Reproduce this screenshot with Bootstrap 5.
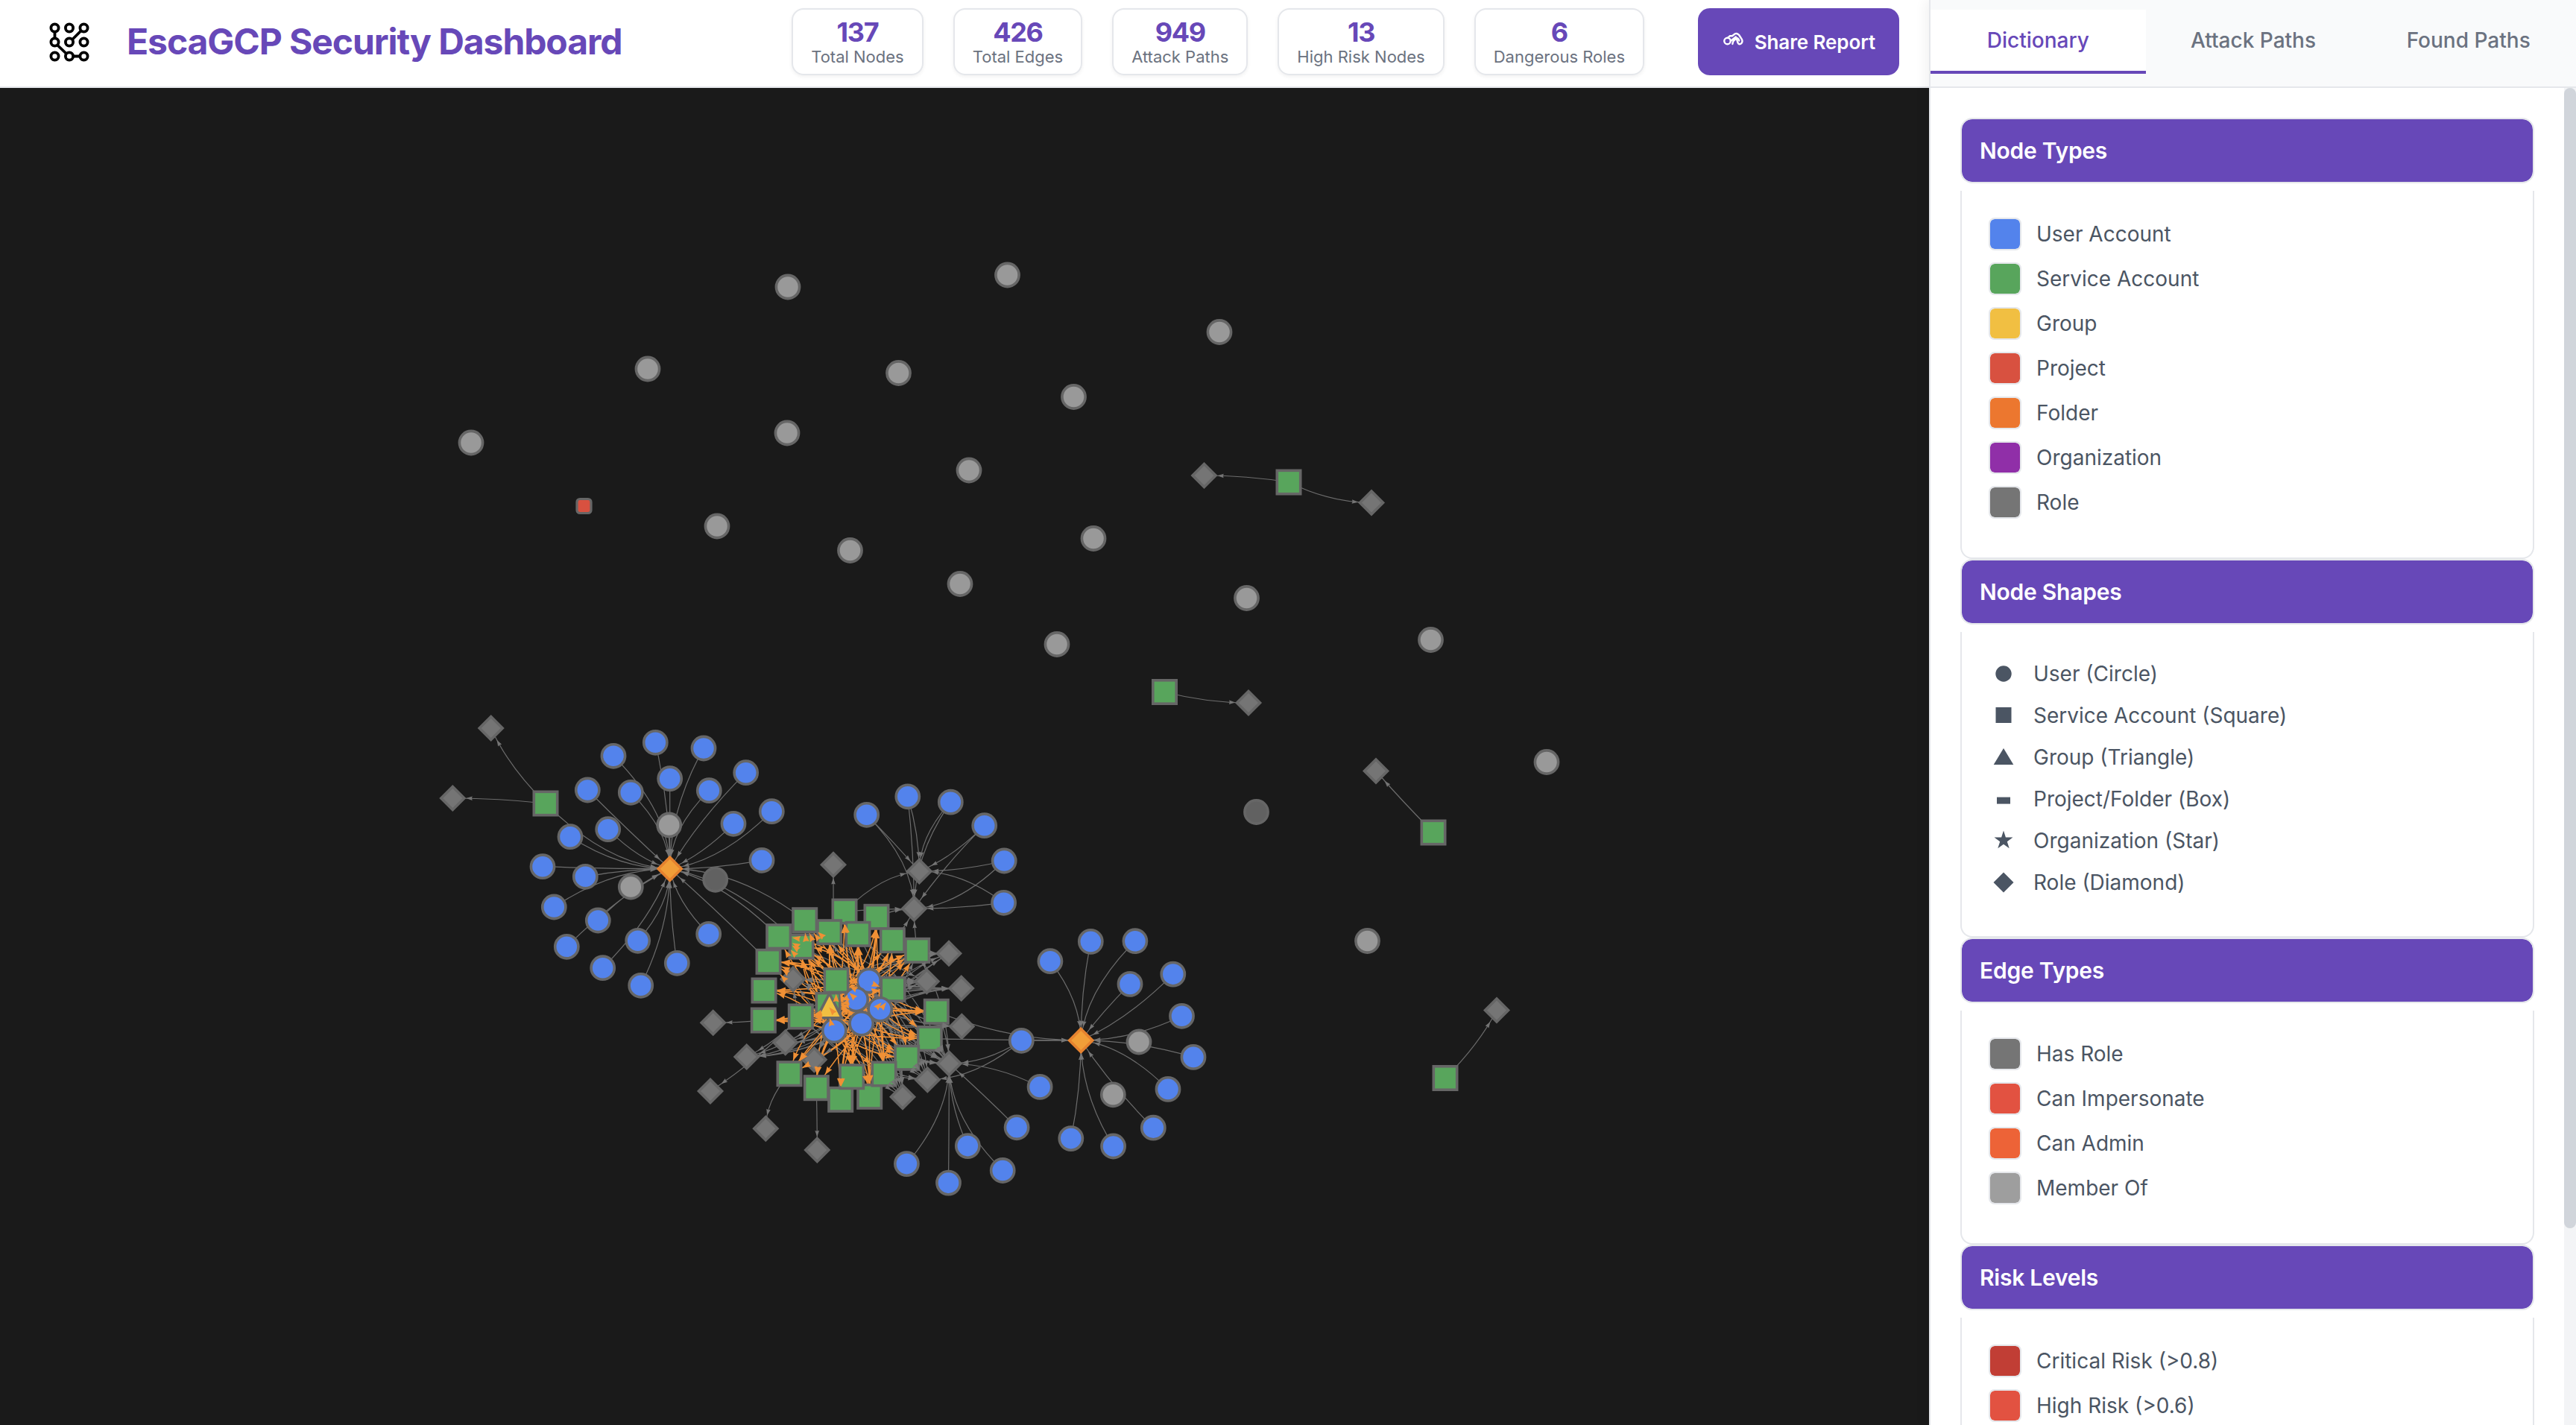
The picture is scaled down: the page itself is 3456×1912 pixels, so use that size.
<!DOCTYPE html>
<html lang="en">
<head>
<meta charset="utf-8">
<title>EscaGCP Security Dashboard</title>
<link href="https://cdn.jsdelivr.net/npm/bootstrap@5.3.0/dist/css/bootstrap.min.css" rel="stylesheet">
<style>
:root { --brand: #6748b8; --line: #e5e7eb; }
body { font-family: Inter, "Liberation Sans", sans-serif; background: #fff; }
.topbar { height: 118px; padding: 0 40px 5px 60px; border-bottom: 2px solid var(--line); }
.app-logo { width: 66px; height: 60px; margin-right: 44px; }
.app-title { font-size: 48px; font-weight: 700; letter-spacing: -1.08px; line-height: 60px; color: var(--brand); }
.stat-row { gap: 40px; margin-right: 72px; }
.stat-box { height: 90px; padding: 12px 24px 0; border: 2px solid var(--line); border-radius: 16px; box-shadow: 0 2px 5px rgba(0,0,0,.06); }
.stat-num { font-size: 36px; line-height: 36px; font-weight: 700; letter-spacing: -1.3px; color: var(--brand); }
.stat-cap { font-size: 22px; line-height: 30px; color: #6b7280; }
.share-btn, .share-btn:hover { width: 270px; height: 90px; border-radius: 16px; background: var(--brand); color: #fff; font-size: 26px; font-weight: 600; letter-spacing: -.1px; border: 0; padding: 2px 32px 0; }
.share-btn svg { width: 30px; height: 20px; margin-right: 14px; margin-top: -7px; }
.graph-area { background: #1a1a1a; min-height: 0; }
.graph-area svg { width: 2588px; height: 1794px; }
.side { width: 868px; border-left: 2px solid var(--line); box-shadow: -4px 0 16px rgba(0,0,0,.06); z-index: 1; }
.tab-strip { height: 118px; padding-top: 13px; background: #f9fafb; border-bottom: 2px solid var(--line); }
.tab-strip .nav-link { height: 86px; padding: 20px 0 0; line-height: 42px; font-size: 28px; font-weight: 500; color: #6b7280; border-radius: 0; border-bottom: 4px solid transparent; }
.tab-strip .nav-link.active { background: #fff; color: var(--brand); border-bottom-color: var(--brand); }
.dict { padding: 40px 40px 0; }
.sec-head { height: 88px; padding-left: 24px; background: var(--brand); background-clip: padding-box; border: 2px solid var(--line); border-radius: 16px; color: #fff; font-size: 30px; font-weight: 600; letter-spacing: -.25px; }
.sec-body { margin-top: 10px; padding: 36px 36px 36px; border: 2px solid var(--line); border-top: 0; border-radius: 0 0 16px 16px; color: #4b5563; font-size: 28px; }
.swatch-row { height: 44px; gap: 20px; margin-bottom: 16px; }
.swatch { width: 44px; height: 44px; border: 2px solid var(--line); border-radius: 8px; background-clip: padding-box; }
.shape-row { height: 40px; gap: 20px; margin-bottom: 16px; }
.shape-row svg { width: 40px; height: 40px; fill: #4b5563; }
.bar-track { width: 16px; background: #f3f4f6; }
.bar-thumb { height: 1530px; border-radius: 8px; background: #d1d5db; }
</style>
</head>
<body>
<div class="d-flex vh-100 overflow-hidden">
  <main class="d-flex flex-column flex-grow-1">
    <header class="topbar d-flex align-items-center flex-shrink-0">
      <svg class="app-logo" viewBox="60 25 66 60" fill="none" stroke="#000" stroke-width="3.8">
        <circle cx="73.5" cy="36.5" r="5.1"/><circle cx="93" cy="36.5" r="5.1"/><circle cx="112.5" cy="36.5" r="5.1"/>
        <circle cx="73.5" cy="55.5" r="5.1"/><circle cx="93" cy="55.5" r="5.1"/><circle cx="112.5" cy="55.5" r="5.1"/>
        <circle cx="73.5" cy="74.5" r="5.1"/><circle cx="93" cy="74.5" r="5.1"/><circle cx="112.5" cy="74.5" r="5.1"/>
        <path d="M73.5 42V50M77 59.5L89 71M98 74.5H107M97 52L109 40"/>
      </svg>
      <h1 class="app-title mb-0 text-nowrap">EscaGCP Security Dashboard</h1>
      <div class="stat-row d-flex ms-auto text-center text-nowrap">
        <div class="stat-box"><div class="stat-num">137</div><div class="stat-cap">Total Nodes</div></div>
        <div class="stat-box"><div class="stat-num">426</div><div class="stat-cap">Total Edges</div></div>
        <div class="stat-box"><div class="stat-num">949</div><div class="stat-cap">Attack Paths</div></div>
        <div class="stat-box"><div class="stat-num">13</div><div class="stat-cap">High Risk Nodes</div></div>
        <div class="stat-box"><div class="stat-num">6</div><div class="stat-cap">Dangerous Roles</div></div>
      </div>
      <button class="share-btn btn d-flex align-items-center text-nowrap">
        <svg viewBox="0 0 30 20" fill="none" stroke="#fff" stroke-width="2.4" stroke-linecap="round"><circle cx="7.6" cy="12" r="4.3"/><path d="M8.5 7.4L11 5.2H14L18 2.2Q21 1 23.4 4L27 9.5Q29 14 25.5 16Q22.500 17 21.500 14L20.500 10.500M12 12L19 6.500M14.500 16Q15 11.500 18.500 9.500L21 8Q23 9 23.500 11.500"/></svg>
        <span>Share Report</span>
      </button>
    </header>
    <section class="graph-area flex-grow-1">
      <svg id="graph" class="d-block" viewBox="0 118 2588 1794"></svg>
    </section>
  </main>
  <aside class="side d-flex flex-column flex-shrink-0 bg-white">
    <nav class="tab-strip nav nav-fill flex-nowrap flex-shrink-0 align-items-start">
      <a class="nav-link active w-100">Dictionary</a>
      <a class="nav-link w-100">Attack Paths</a>
      <a class="nav-link w-100">Found Paths</a>
    </nav>
    <div class="d-flex flex-grow-1 overflow-hidden">
      <div class="dict flex-grow-1">
        <div class="sec-head d-flex align-items-center">Node Types</div>
        <div class="sec-body">
          <div class="swatch-row d-flex align-items-center"><span class="swatch" style="background-color:#5383ec"></span>User Account</div>
          <div class="swatch-row d-flex align-items-center"><span class="swatch" style="background-color:#58a55c"></span>Service Account</div>
          <div class="swatch-row d-flex align-items-center"><span class="swatch" style="background-color:#f1bf42"></span>Group</div>
          <div class="swatch-row d-flex align-items-center"><span class="swatch" style="background-color:#d85140"></span>Project</div>
          <div class="swatch-row d-flex align-items-center"><span class="swatch" style="background-color:#ec772f"></span>Folder</div>
          <div class="swatch-row d-flex align-items-center"><span class="swatch" style="background-color:#902fa8"></span>Organization</div>
          <div class="swatch-row d-flex align-items-center"><span class="swatch" style="background-color:#757575"></span>Role</div>
        </div>
        <div class="sec-head d-flex align-items-center">Node Shapes</div>
        <div class="sec-body">
          <div class="shape-row d-flex align-items-center"><svg viewBox="0 0 40 40"><circle cx="20" cy="20" r="10.700"/></svg>User (Circle)</div>
          <div class="shape-row d-flex align-items-center"><svg viewBox="0 0 40 40"><path d="M9.500 9H30.500V30H9.500Z"/></svg>Service Account (Square)</div>
          <div class="shape-row d-flex align-items-center"><svg viewBox="0 0 40 40"><path d="M20 8L33.300 30H6.700Z"/></svg>Group (Triangle)</div>
          <div class="shape-row d-flex align-items-center"><svg viewBox="0 0 40 40"><path d="M11 17.600H29V26.600H11Z"/></svg>Project/Folder (Box)</div>
          <div class="shape-row d-flex align-items-center"><svg viewBox="0 0 40 40"><path d="M20 6.500L22.900 15.600H32.500L24.800 21.200L27.700 30.300L20 24.700L12.300 30.300L15.200 21.200L7.500 15.600H17.100Z"/></svg>Organization (Star)</div>
          <div class="shape-row d-flex align-items-center"><svg viewBox="0 0 40 40"><path d="M20 6.500L33.500 20L20 33.500L6.500 20Z"/></svg>Role (Diamond)</div>
        </div>
        <div class="sec-head d-flex align-items-center">Edge Types</div>
        <div class="sec-body">
          <div class="swatch-row d-flex align-items-center"><span class="swatch" style="background-color:#757575"></span>Has Role</div>
          <div class="swatch-row d-flex align-items-center"><span class="swatch" style="background-color:#e25241"></span>Can Impersonate</div>
          <div class="swatch-row d-flex align-items-center"><span class="swatch" style="background-color:#ed6337"></span>Can Admin</div>
          <div class="swatch-row d-flex align-items-center"><span class="swatch" style="background-color:#9e9e9e"></span>Member Of</div>
        </div>
        <div class="sec-head d-flex align-items-center">Risk Levels</div>
        <div class="sec-body">
          <div class="swatch-row d-flex align-items-center"><span class="swatch" style="background-color:#c13e35"></span>Critical Risk (&gt;0.8)</div>
          <div class="swatch-row d-flex align-items-center"><span class="swatch" style="background-color:#e25241"></span>High Risk (&gt;0.6)</div>
        </div>
      </div>
      <div class="bar-track flex-shrink-0"><div class="bar-thumb"></div></div>
    </div>
  </aside>
</div>
<script src="https://cdn.jsdelivr.net/npm/bootstrap@5.3.0/dist/js/bootstrap.bundle.min.js"></script>
<script>
// Node positions, grouped by where they sit in the graph
const loose = [[1057,385],[1351.5,369],[1636,445.5],[869,495],[1205.500,500.5],[1440.5,532.5],[632,594],[1056,581],[1300,631],[962,706],[1140.5,738.5],[1467,722.5],[1288,783.500],[1672.5,802.5],[1418,864.5],[1919.5,858.5],[2075,1022.5],[1834.5,1262.5],[897.7,1107],[846.3,1190],[1528,1398],[1493.3,1468.8]];
const dim = [[1685.5,1089.5],[959.7,1180.3]];
const leftUsers = [[823,1014.3],[879.3,996.3],[944,1004],[1000.7,1036.7],[788.3,1060],[846.3,1063.3],[898.7,1044.7],[951.3,1060.7],[1035.3,1088.7],[984,1105.3],[1022,1154.3],[765,1122.7],[815.7,1112.7],[728,1162.7],[785.3,1176.3],[743.3,1217],[802.3,1235],[760.3,1270.3],[855.7,1262.3],[808.7,1298.7],[859.7,1322.3],[908.3,1292.3],[950.7,1253.3]];
const topUsers = [[1162.7,1093.3],[1217.8,1068.8],[1275.3,1076.2],[1320.7,1107.7],[1347.2,1155],[1346.6,1211.3]];
const rightUsers = [[1408.9,1289.7],[1463.3,1263.4],[1522.9,1262.7],[1516,1320.4],[1573.8,1307.1],[1585.5,1363.3],[1601,1418.4],[1567,1461.4],[1547.3,1513.2],[1436.8,1527.6],[1493.6,1538]];
const lowUsers = [[1370.3,1396.3],[1395.1,1458.4],[1364.1,1512.8],[1298.3,1537.6],[1216.4,1561.6],[1272.5,1587.1],[1345.2,1570.5]];
const coreUsers = [[1165.7,1316],[1148.7,1341],[1180.7,1354.3],[1155.7,1373.3],[1119.3,1382.7]];
const core = [[1133,1223],[1176,1230.3],[1079.7,1234.7],[1112.7,1250.7],[1075,1270],[1151,1253.3],[1044.7,1256.7],[1197.3,1261.7],[1230.7,1275.3],[1031,1290.3],[1122,1315.7],[1198,1327.3],[1025,1329],[1024.3,1369],[1111,1348.3],[1074.3,1364],[1256.3,1357.3],[1247.3,1393.7],[1216.7,1419.3],[1166.7,1471.3],[1186,1441],[1059,1440.7],[1095.3,1459.7],[1127.7,1475.3],[1142.7,1444.7]];
const outerSvc = [[1729,647],[1562.5,928.5],[1923,1117],[1939,1446.5],[732,1078]];
const roles = [[1615.5,638],[1840,674.5],[1675,943],[1846,1034.5],[2008,1355.5],[658.7,977],[607.3,1071],[1118,1160.3],[1233.3,1169],[1226.3,1219.3],[1273,1279.3],[1243.3,1316.7],[1289.7,1326],[1290.3,1377.3],[1273.3,1427],[1244.3,1448.7],[1211,1471.7],[1064,1313.7],[956.7,1372.3],[1001.7,1418],[1053.7,1398.7],[1092.3,1421.7],[953,1464],[1027.3,1514.3],[1096.3,1543]];
const hubs = [[898.7,1165.7],[1450.2,1395.9]];
const group = [1112.7,1352];

const edges = [];
const link = (a, b, hot) => edges.push({ a, b, hot });
// roles held by the users and service accounts in the core
const innerRoles = [10,11,12,13,14,15,16,17,19,20,21].map(i => roles[i]);
coreUsers.forEach(u => innerRoles.forEach(r => link(u, r)));
[10,11,14,15].forEach(i => [10,11,12,14,15,16,17].forEach(r => link(core[i], roles[r])));
[8,16,17,18].forEach(i => link(core[i], roles[14]));
coreUsers.slice(0,4).forEach(u => [8,16,17,18,20,7,4,3,5].forEach(i => link(u, core[i])));
[3,4,5].forEach(i => [11,14,16].forEach(r => link(core[i], roles[r])));
[[0,8],[1,9],[0,9],[8,9],[7,9],[13,18],[15,19],[15,22],[21,23],[22,24],[8,11],[8,10]].forEach(([s, r]) => link(core[s], roles[r]));
link(coreUsers[4], roles[7]);
[[0,0],[0,1],[1,2],[2,3],[3,4],[4,5],[4,6]].forEach(([s, r]) => link(outerSvc[s], roles[r]));
leftUsers.forEach(u => link(u, hubs[0]));
[outerSvc[4], core[2], core[6], core[4], core[9]].forEach(s => link(s, hubs[0]));
topUsers.forEach(u => { link(u, roles[8]); link(u, roles[9]); });
rightUsers.forEach(u => link(u, hubs[1]));
[lowUsers[0], core[17], core[16]].forEach(s => link(s, hubs[1]));
lowUsers.forEach(u => link(u, roles[14]));
link(lowUsers[0], roles[15]);
// impersonation paths
[...coreUsers, group].forEach((u, k) => core.forEach((s, i) => { if (k < 2 || (i + k) % 5) link(u, s, true); }));

const isSquare = n => core.includes(n);
const lines = { cold: '', hot: '' }, heads = { cold: '', hot: '' };
for (const { a, b, hot } of edges) {
  const dx = b[0] - a[0], dy = b[1] - a[1], ax = Math.abs(dx), ay = Math.abs(dy);
  const step = Math.max(ax, ay) / 2;
  const c = [a[0] + Math.sign(dx) * Math.min(step, ax), a[1] + Math.sign(dy) * Math.min(step, ay)];
  const at = t => [0, 1].map(i => (1-t)*(1-t)*a[i] + 2*t*(1-t)*c[i] + t*t*b[i]);
  let t = 1, p = b;
  const far = q => isSquare(b) ? Math.max(Math.abs(q[0]-b[0]), Math.abs(q[1]-b[1])) : Math.hypot(q[0]-b[0], q[1]-b[1]);
  while (t > 0.1 && far(p) < 17.5) { t -= 0.004; p = at(t); }
  const q = at(Math.max(0, t - 0.06)), ang = Math.atan2(p[1]-q[1], p[0]-q[0]);
  const L = hot ? 11 : 8.5, W = hot ? 4 : 2.8, cs = Math.cos(ang), sn = Math.sin(ang);
  const k = hot ? 'hot' : 'cold', f = v => v.toFixed(1);
  lines[k] += `M${f(a[0])} ${f(a[1])}Q${f(c[0])} ${f(c[1])} ${f(b[0])} ${f(b[1])}`;
  heads[k] += `M${f(p[0])} ${f(p[1])}L${f(p[0]-L*cs+W*sn)} ${f(p[1]-L*sn-W*cs)}L${f(p[0]-L*.9*cs)} ${f(p[1]-L*.9*sn)}L${f(p[0]-L*cs-W*sn)} ${f(p[1]-L*sn+W*cs)}Z`;
}
const disc = (fill, rim = '#666') => ([x, y]) => `<circle cx="${x}" cy="${y}" r="15.6" fill="${fill}" stroke="${rim}"/>`;
const square = ([x, y]) => `<rect x="${x-15.7}" y="${y-15.7}" width="31.4" height="31.4" fill="#58a55c" stroke="#666"/>`;
const diamond = (fill, rim) => ([x, y]) => `<path d="M${x} ${y-15.5}l15.500 15.500l-15.500 15.500l-15.500 -15.500z" fill="${fill}" stroke="${rim}"/>`;
const users = [...leftUsers, ...topUsers, ...rightUsers, ...lowUsers, ...coreUsers];
document.getElementById('graph').innerHTML =
  `<path d="${lines.cold}" fill="none" stroke="#6c6c6c" stroke-width="1.2"/>` +
  `<path d="${lines.hot}" fill="none" stroke="#f09035" stroke-width="1.5"/>` +
  '<g stroke-width="3.6">' +
  roles.map(diamond('#757575', '#666')).join('') + [...outerSvc, ...core].map(square).join('') +
  users.map(disc('#5383ec')).join('') + loose.map(disc('#999')).join('') + dim.map(disc('#616161')).join('') +
  hubs.map(diamond('#f19e38', '#e5822f')).join('') +
  '<path d="M1112.700 1333L1129.500 1365.800H1095.900Z" fill="#f1bf42" stroke="#666"/>' +
  '<rect x="774" y="669.500" width="19" height="19" rx="4" fill="#d85140" stroke="#666" stroke-width="3.200"/></g>' +
  `<path d="${heads.cold}" fill="#757575"/><path d="${heads.hot}" fill="#f09035"/>`;
</script>
</body>
</html>
